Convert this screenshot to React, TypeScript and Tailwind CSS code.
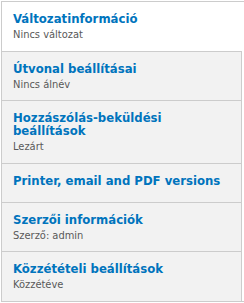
const tabs = [
  { title: "Változatinformáció", summary: "Nincs változat", active: true },
  { title: "Útvonal beállításai", summary: "Nincs álnév" },
  { title: "Hozzászólás-beküldési beállítások", summary: "Lezárt" },
  { title: "Printer, email and PDF versions" },
  { title: "Szerzői információk", summary: "Szerző: admin" },
  { title: "Közzétételi beállítások", summary: "Közzétéve" },
];

export default function App() {
  return (
    <div className="h-[303px] w-[244px] bg-white pl-[1px] pt-[1px] font-['DejaVu_Sans_Condensed','DejaVu_Sans',sans-serif]">
      <ul className="border-y border-l border-[#cccccc]">
        {tabs.map((tab, i) => (
          <li
            key={tab.title}
            className={
              (i > 0 ? "border-t border-[#cccccc] " : "") +
              (tab.active ? "w-[243px] bg-white" : "w-[240px] border-r border-[#cccccc] bg-[#f2f2f2]")
            }
          >
            <a
              href="#"
              className={
                "block pt-[10px] pr-[12px] pl-[11px] " + (tab.summary ? "pb-[9.5px]" : "pb-[15px]")
              }
            >
              <strong className="block text-[13px] leading-[13px] font-bold text-[#0074bd]">{tab.title}</strong>
              {tab.summary ? (
                <span className="mt-[4px] block text-[11px] leading-[12px] text-[#595959]">{tab.summary}</span>
              ) : null}
            </a>
          </li>
        ))}
      </ul>
    </div>
  );
}
